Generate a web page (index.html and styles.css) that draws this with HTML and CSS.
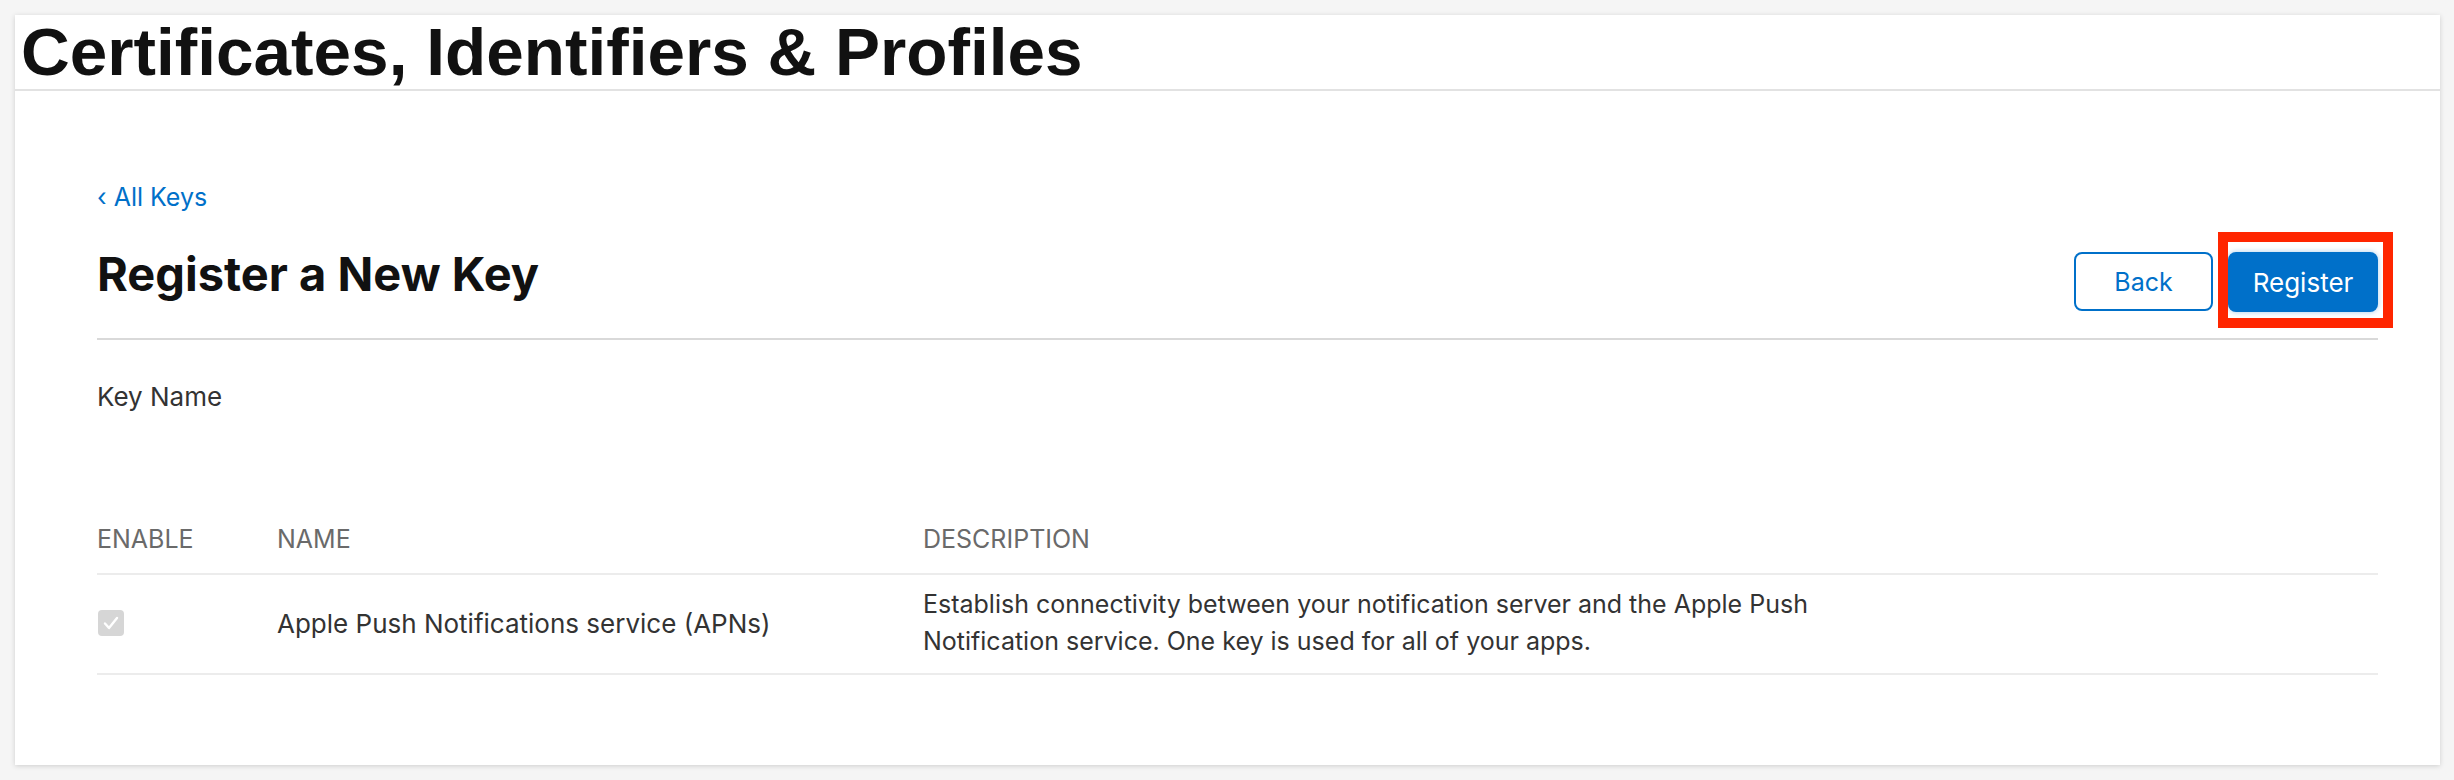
FILE: index.html
```html
<!DOCTYPE html>
<html lang="en">
<head>
<meta charset="utf-8">
<title>Register a New Key</title>
<link rel="stylesheet" href="styles.css">
</head>
<body>
<div class="card">
  <header class="card-header">
    <h1 class="site-title">Certificates, Identifiers &amp; Profiles</h1>
  </header>
  <main class="content">
    <a class="back-link" href="#">‹ All Keys</a>
    <div class="title-row">
      <h2 class="page-title">Register a New Key</h2>
      <div class="actions">
        <button class="btn btn-secondary" type="button">Back</button>
        <div class="highlight-wrap">
          <button class="btn btn-primary" type="button">Register</button>
          <span class="highlight-box"></span>
        </div>
      </div>
    </div>
    <div class="field-label">Key Name</div>
    <div class="table">
      <div class="table-head">
        <div class="col-enable">ENABLE</div>
        <div class="col-name">NAME</div>
        <div class="col-desc">DESCRIPTION</div>
      </div>
      <div class="table-row">
        <div class="col-enable">
          <span class="checkbox">
            <svg viewBox="0 0 26 26" width="26" height="26"><path d="M7 13.5l4 4.5 8-10" fill="none" stroke="#fff" stroke-width="2.4" stroke-linecap="round" stroke-linejoin="round"/></svg>
          </span>
        </div>
        <div class="col-name name-cell">Apple Push Notifications service (APNs)</div>
        <div class="col-desc desc-cell">Establish connectivity between your notification server and the Apple Push Notification service. One key is used for all of your apps.</div>
      </div>
    </div>
  </main>
</div>
</body>
</html>
```

FILE: styles.css
```css
* { box-sizing: border-box; }

html, body {
  margin: 0;
  padding: 0;
}

body {
  background: #f5f5f5;
  padding: 15px 14px 15px 15px;
  font-family: Inter, "Noto Sans", "Liberation Sans", sans-serif;
  color: #333;
}

.card {
  width: 2425px;
  height: 750px;
  background: #fff;
  box-shadow: 0 1px 5px rgba(0, 0, 0, 0.16);
}

.card-header {
  padding: 1px 0 0 6px;
  height: 76px;
  border-bottom: 2px solid #e2e2e2;
}

.site-title {
  margin: 0;
  font-family: "Liberation Sans", Arial, sans-serif;
  font-weight: 700;
  font-size: 67.5px;
  line-height: 72px;
  letter-spacing: 0;
  color: #111;
}

.content {
  padding: 92px 62px 0 82px;
}

.back-link {
  display: block;
  font-size: 25px;
  line-height: 29px;
  color: #0070c9;
  text-decoration: none;
}

.title-row {
  display: flex;
  justify-content: space-between;
  align-items: flex-start;
  margin-top: 35px;
  padding-bottom: 26px;
  border-bottom: 2px solid #d9d9d9;
}

.page-title {
  margin: 0;
  font-size: 47px;
  line-height: 54px;
  font-weight: 700;
  color: #111;
}

.actions {
  display: flex;
  gap: 15px;
  margin-top: 5px;
}

.btn {
  height: 60px;
  border-radius: 8px;
  font-family: Inter, "Noto Sans", sans-serif;
  font-size: 25px;
  padding: 0;
  cursor: pointer;
}

.btn-secondary {
  width: 139px;
  height: 59px;
  background: #fff;
  color: #0070c9;
  border: 2px solid #0070c9;
}

.btn-primary {
  width: 150px;
  font-size: 26px;
  background: #0070c9;
  color: #fff;
  border: none;
  box-shadow: 0 0 4px 1px rgba(0, 112, 201, 0.25);
}

.highlight-wrap {
  position: relative;
  display: flex;
}

.highlight-box {
  position: absolute;
  left: -10px;
  top: -20px;
  right: -15px;
  bottom: -16px;
  border: 10px solid #ff2600;
  pointer-events: none;
}

.field-label {
  margin-top: 42px;
  font-size: 26px;
  line-height: 29px;
  color: #333;
}

.table {
  margin-top: 114px;
}

.table-head,
.table-row {
  display: grid;
  grid-template-columns: 180px 646px 1fr;
}

.table-head {
  font-size: 25px;
  line-height: 29px;
  color: #6a6a6a;
  padding-bottom: 19px;
  border-bottom: 2px solid #ececec;
}

.table-row {
  align-items: center;
  padding: 11px 0 13px;
  border-bottom: 2px solid #ececec;
  font-size: 25px;
  color: #333;
}

.checkbox {
  display: block;
  width: 26px;
  height: 26px;
  margin-left: 1px;
  border-radius: 4px;
  background: #d6d6d6;
}

.checkbox svg {
  display: block;
}

.name-cell {
  font-size: 26px;
  line-height: 37px;
}

.desc-cell {
  line-height: 37px;
  max-width: 960px;
}
```
